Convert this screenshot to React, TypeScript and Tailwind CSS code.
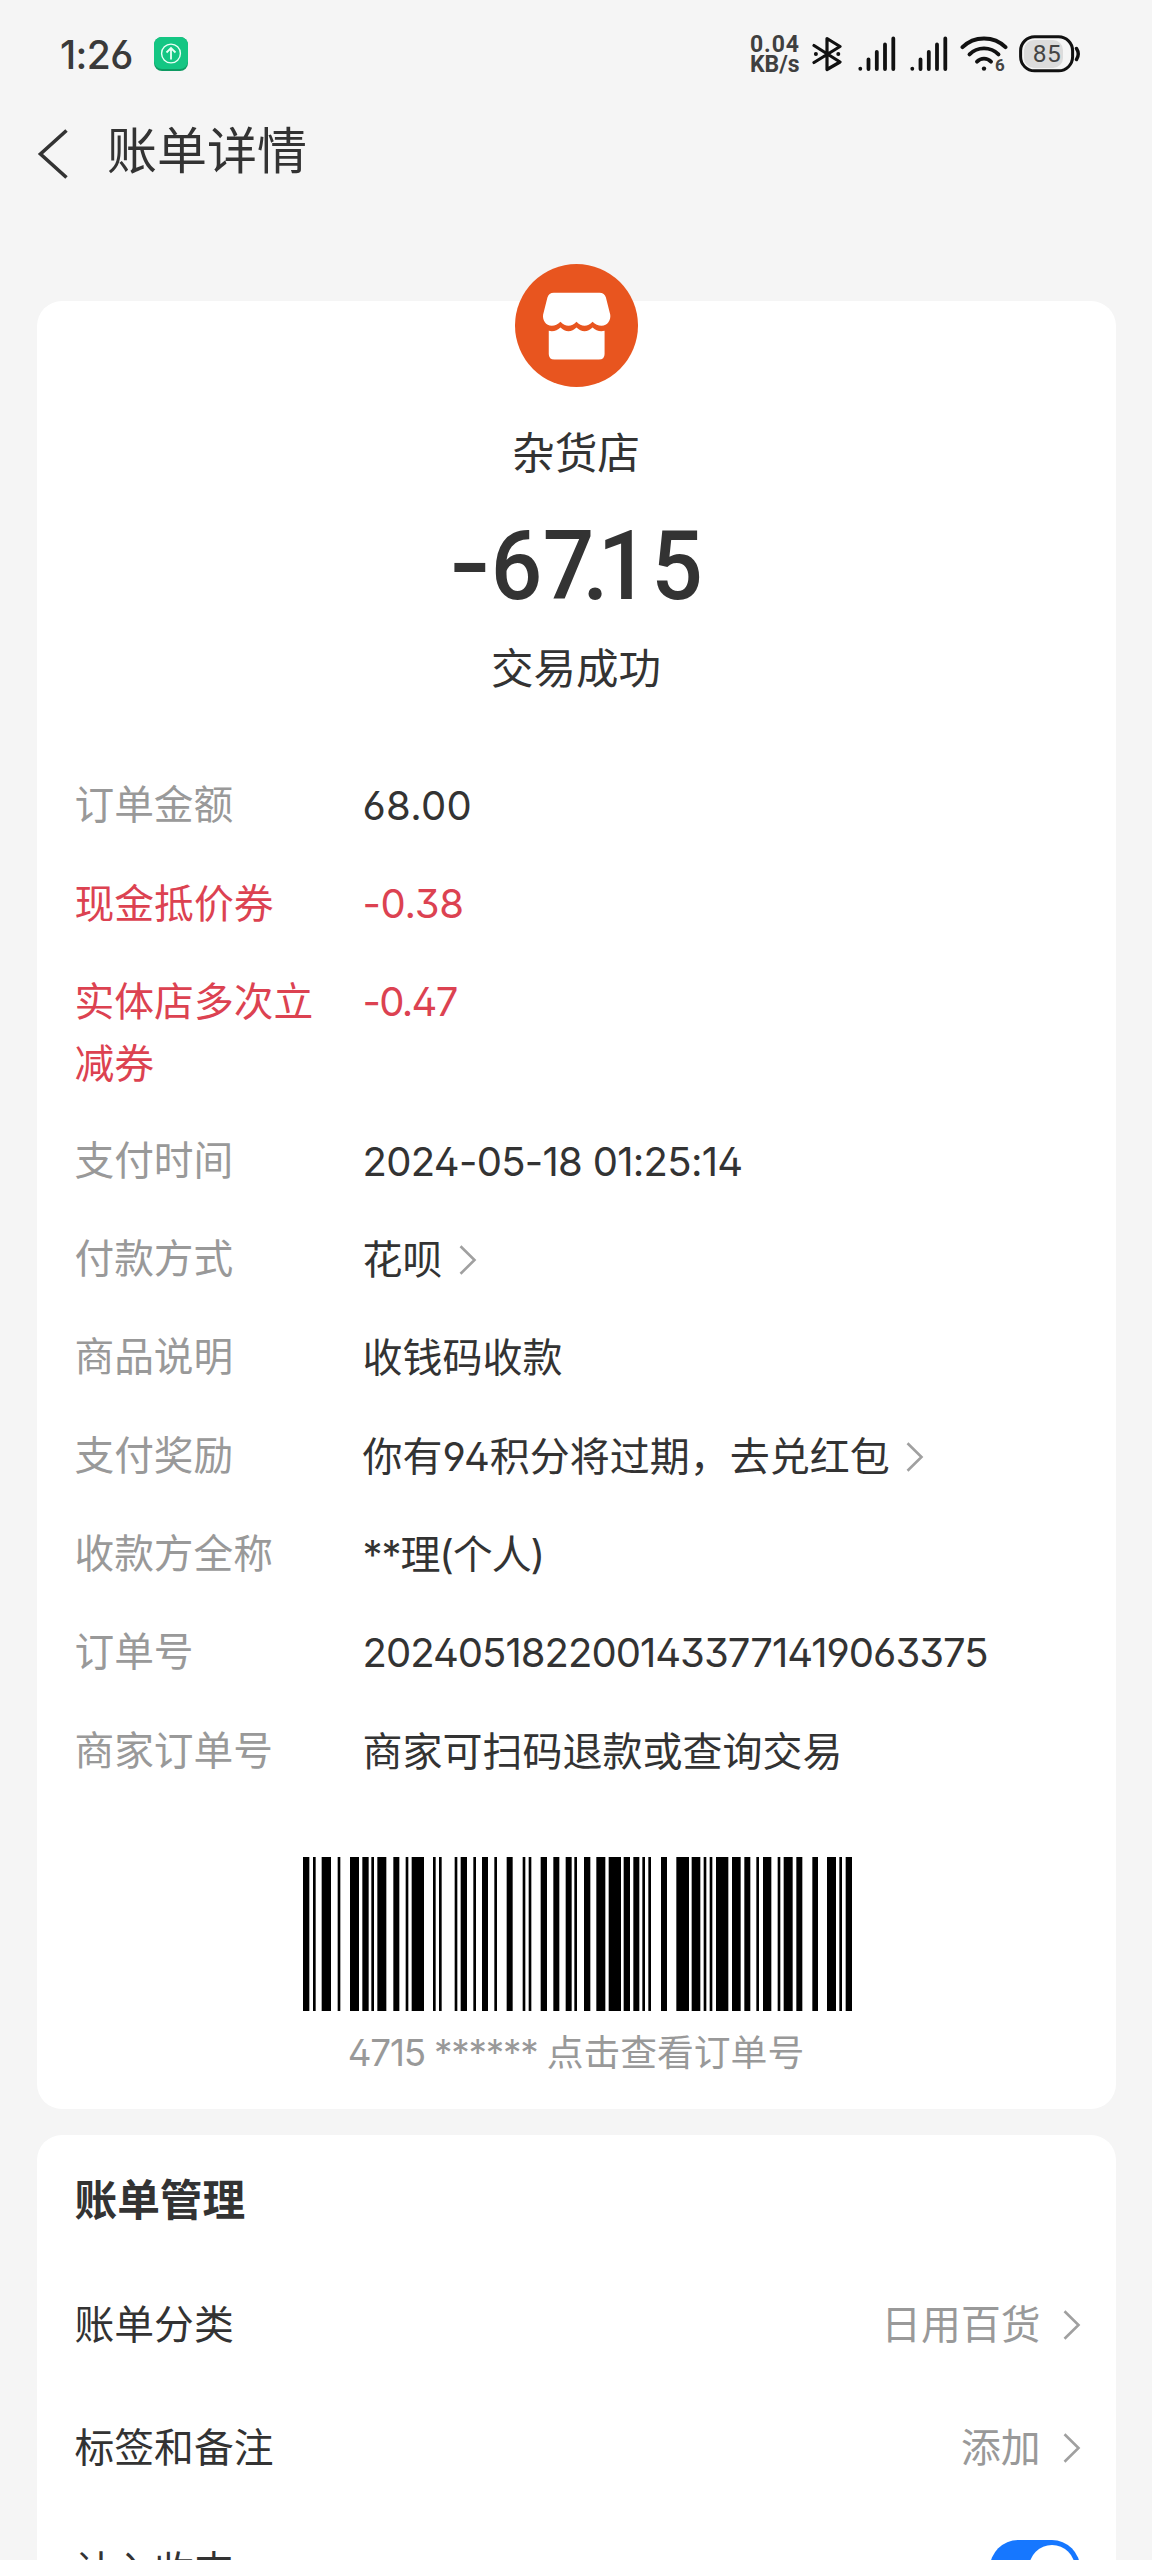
import React, { useState } from "react";

interface DetailRow {
  label: string;
  value: string;
  highlight?: boolean;
  link?: boolean;
  valueClass?: string;
}

const detailRows: DetailRow[] = [
  { label: "订单金额", value: "68.00", valueClass: "tracking-[0.3px]" },
  { label: "现金抵价券", value: "-0.38", highlight: true, valueClass: "tracking-[-0.3px]" },
  { label: "实体店多次立减券", value: "-0.47", highlight: true, valueClass: "tracking-[-1.7px]" },
  { label: "支付时间", value: "2024-05-18 01:25:14", valueClass: "tracking-[-0.7px]" },
  { label: "付款方式", value: "花呗", link: true },
  { label: "商品说明", value: "收钱码收款" },
  { label: "支付奖励", value: "你有94积分将过期，去兑红包", link: true },
  { label: "收款方全称", value: "**理(个人)", valueClass: "tracking-[-1.1px]" },
  { label: "订单号", value: "2024051822001433771419063375", valueClass: "tracking-[-0.97px]" },
  { label: "商家订单号", value: "商家可扫码退款或查询交易" },
];

// [start, end] of each black bar, in thirds of a pixel
const barcodeBars: [number, number][] = [
  [0, 19], [30, 38], [56, 84], [104, 112], [141, 168], [178, 197], [205, 213], [223, 250],
  [271, 289], [308, 316], [326, 363], [390, 398], [408, 416], [455, 463], [473, 492], [511, 519],
  [537, 555], [574, 582], [611, 629], [659, 667], [677, 685], [713, 732], [751, 769], [788, 806],
  [814, 822], [843, 862], [880, 907], [917, 954], [962, 981], [991, 1009], [1018, 1026], [1036, 1044],
  [1074, 1092], [1120, 1158], [1166, 1192], [1202, 1210], [1220, 1228], [1239, 1276], [1287, 1313],
  [1324, 1342], [1360, 1368], [1380, 1405], [1424, 1432], [1442, 1469], [1480, 1498], [1528, 1545],
  [1572, 1599], [1609, 1617], [1628, 1647],
];

function Chevron() {
  return (
    <svg width="18" height="30" viewBox="0 0 18 30" fill="none" stroke="#a0a0a0" strokeWidth="2.6" className="shrink-0">
      <path d="M1.5 1.2 L15.5 15 L1.5 28.8" />
    </svg>
  );
}

function SignalIcon() {
  return (
    <svg width="38" height="36" viewBox="0 0 38 36" fill="none" stroke="#111" strokeWidth="3.8" strokeLinecap="round">
      <path d="M2.3 32.8V32.6M10.5 33V23.3M18.8 33V15.8M27 33V8.5M35.3 33V2.5" />
    </svg>
  );
}

function StatusBar() {
  return (
    <div className="flex h-[108px] items-center pl-[60px] pr-[70px]">
      <span className="text-[39px] font-medium leading-none tracking-[-0.6px] text-[#3a3a3a]">1:26</span>
      <svg width="34" height="34" viewBox="0 0 34 34" className="ml-[21px]">
        <rect width="34" height="34" rx="8" fill="#0e9a62" />
        <rect width="34" height="32" rx="8" fill="#14c683" />
        <g fill="none" stroke="#e9fff5" strokeWidth="1.4">
          <circle cx="17" cy="16.5" r="9.4" />
          <path d="M17 22.5V11.5M12.5 15.5L17 11L21.5 15.5" strokeWidth="1.8" />
        </g>
      </svg>

      <div className="ml-auto flex items-center">
        <div className="mt-[2px] w-[50px] whitespace-nowrap font-['Roboto'] text-[23px] font-bold leading-[20px] text-[#3f3f3f]">
          <div className="tracking-[0.9px]">0.04</div>
          <div>KB/s</div>
        </div>
        <svg width="30" height="36" viewBox="0 0 30 36" fill="none" stroke="#111" strokeWidth="3.2" strokeLinejoin="round" strokeLinecap="round" className="ml-[12px]">
          <path d="M2 9.5L28 26L15 33.5V2.5L28 10.5L2 26.5" />
          <path d="M3.8 18H4M26.2 18H26.4" strokeWidth="3.8" />
        </svg>
        <div className="ml-[16px] flex gap-[14px]">
          <SignalIcon />
          <SignalIcon />
        </div>
        <svg width="48" height="42" viewBox="0 -3 48 42" fill="none" stroke="#111" strokeWidth="3.9" strokeLinecap="round" className="ml-[12px]">
          <path d="M2.5 11.2C14 -.5 34 -.5 45.5 11.2" />
          <path d="M9.5 18.4C17.5 10.4 30.5 10.4 38.5 18.4" />
          <path d="M17 25.6C21 21.6 27 21.6 31 25.6" />
          <circle cx="24" cy="32.6" r="2.2" fill="#111" stroke="none" />
          <text x="35" y="35" fontSize="17" fontWeight="700" fill="#444" stroke="none" fontFamily="Roboto, sans-serif">6</text>
        </svg>
        <svg width="63" height="38" viewBox="0 0 63 38" className="ml-[11px]">
          <rect x="5" y="5" width="39" height="28" rx="10" fill="#dcdcdc" />
          <rect x="1.6" y="1.8" width="52" height="34" rx="14" fill="none" stroke="#111" strokeWidth="3" />
          <path d="M57.5 13.5Q61 19 57.5 24.5" fill="none" stroke="#111" strokeWidth="3.4" strokeLinecap="round" />
          <text x="28" y="27.3" textAnchor="middle" fontSize="24.5" letterSpacing="0.5" fill="#444" fontFamily="Roboto, sans-serif">85</text>
        </svg>
      </div>
    </div>
  );
}

function StoreIcon() {
  return (
    <svg width="123" height="123" viewBox="256 72 368 368">
      <circle cx="440" cy="256" r="184" fill="#e8551f" />
      <path
        d="M372 158H509Q524 158 528 172L541 224C543 240 533 257 515 257Q500 257 488 245Q477 257 464 257Q451 257 440 245Q429 257 416 257Q403 257 392 245Q380 257 366 257C348 257 338 240 340 224L353 172Q357 158 372 158Z"
        fill="#fff"
      />
      <path
        d="M357 272Q378 276 392 262Q403 273 416 273Q429 273 440 262Q451 273 464 273Q477 273 488 262Q502 276 524 272V341Q524 358 507 358H374Q357 358 357 341Z"
        fill="#fff"
      />
    </svg>
  );
}

// The amount is set tighter than the font's own digits
function Amount() {
  return (
    <div className="mt-[32px] flex h-[100px] w-[271px] pl-[9px] font-['Roboto'] text-[95.5px] font-medium leading-[100px]">
      <span className="flex w-[40px] -translate-y-[2px] scale-x-[1.25] justify-center">-</span>
      <span className="flex w-[53px] scale-x-[0.95] justify-center">6</span>
      <span className="flex w-[51px] scale-x-[0.95] justify-center">7</span>
      <span className="flex w-[4px] justify-center">.</span>
      <span className="flex w-[51px] scale-x-[0.95] justify-center">1</span>
      <span className="flex w-[56px] scale-x-[0.95] justify-center">5</span>
    </div>
  );
}

function Barcode() {
  return (
    <svg width="549" height="154" viewBox="0 0 1647 462" preserveAspectRatio="none">
      {barcodeBars.map(([start, end]) => (
        <rect key={start} x={start} y="0" width={end - start} height="462" fill="#000" />
      ))}
    </svg>
  );
}

export default function App() {
  const [counted, setCounted] = useState(true);

  return (
    <div className="h-[2560px] w-[1152px] overflow-hidden bg-[#f5f5f5] font-['Inter','Noto_Sans_CJK_SC',sans-serif] text-[#333] [font-feature-settings:'ss01','cv03','cv04']">
      <StatusBar />

      {/* Title bar */}
      <header className="flex h-[84px] items-center pl-[37px]">
        <svg width="32" height="50" viewBox="0 0 32 50" fill="none" stroke="#333" strokeWidth="3.6" className="mt-[8px]">
          <path d="M29.5 1.5L3.5 25L29.5 48.5" />
        </svg>
        <h1 className="ml-[38px] mt-[1px] text-[50px] leading-[84px]">账单详情</h1>
      </header>

      {/* Transaction card */}
      <section className="mx-[36.5px] mt-[109px] flex h-[1808px] flex-col items-center rounded-[25px] bg-white px-[38px]">
        <div className="-mt-[37px]">
          <StoreIcon />
        </div>
        <div className="mt-[37px] text-[42.7px] leading-[60px]">杂货店</div>
        <Amount />
        <div className="mt-[23px] text-[42.5px] leading-[60px]">交易成功</div>

        <dl className="mt-[75.5px] flex flex-col gap-[36.8px] self-stretch text-[40px] leading-[61.5px]">
          {detailRows.map((row) => (
            <div key={row.label} className={row.highlight ? "flex text-[#dc4251]" : "flex"}>
              <dt
                className={
                  row.highlight
                    ? "w-[288px] shrink-0 pr-[40px] text-[39.8px]"
                    : "w-[288px] shrink-0 pr-[40px] text-[39.7px] text-[#999]"
                }
              >
                {row.label}
              </dt>
              <dd className="flex items-center gap-[16px] self-start whitespace-nowrap">
                <span className={row.valueClass}>{row.value}</span>
                {row.link && <Chevron />}
              </dd>
            </div>
          ))}
        </dl>

        <div className="ml-[2px] mt-[75px] h-[154px]">
          <Barcode />
        </div>
        <div className="mt-[17px] text-[36.8px] leading-[50px] text-[#999]">
          <span className="tracking-[-1.2px]">4715 ****** </span>点击查看订单号
        </div>
      </section>

      {/* Bill management card */}
      <section className="mx-[36.5px] mt-[25.5px] rounded-[25px] bg-white pl-[38px] pr-[35px] pt-[36px] text-[39.8px]">
        <h2 className="text-[42.7px] font-bold leading-[60px]">账单管理</h2>
        <div className="mt-[33px]">
          <div className="flex h-[123px] items-center justify-between">
            <span>账单分类</span>
            <span className="flex items-center gap-[22px] text-[#999]">
              日用百货
              <Chevron />
            </span>
          </div>
          <div className="flex h-[123px] items-center justify-between">
            <span>标签和备注</span>
            <span className="flex items-center gap-[22px] text-[#999]">
              添加
              <Chevron />
            </span>
          </div>
          <div className="flex h-[123px] items-center justify-between">
            <span>计入收支</span>
            <button
              onClick={() => setCounted(!counted)}
              className={
                counted
                  ? "-mt-[6px] mr-[1px] flex h-[56px] w-[90px] justify-end rounded-full bg-[#1677ff] p-[5px]"
                  : "-mt-[6px] mr-[1px] flex h-[56px] w-[90px] justify-start rounded-full bg-[#ccc] p-[5px]"
              }
            >
              <span className="size-[46px] rounded-full bg-white" />
            </button>
          </div>
        </div>
      </section>
    </div>
  );
}
